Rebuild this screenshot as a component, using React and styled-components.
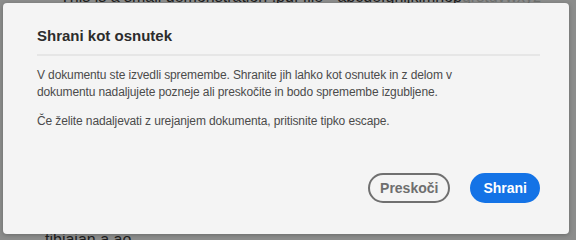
import React from "react";
import styled, { createGlobalStyle } from "styled-components";

const Global = createGlobalStyle`
  html, body { margin: 0; padding: 0; }
  body {
    width: 576px; height: 240px; overflow: hidden;
    background: #8c8d8c;
    font-family: "Liberation Sans", Arial, sans-serif;
  }
`;

const Backdrop = styled.div`
  position: relative;
  width: 576px;
  height: 240px;
  overflow: hidden;
  background: #8c8d8c;
`;

const DocLine = styled.div`
  position: absolute;
  left: ${(p) => p.$x}px;
  top: ${(p) => p.$y}px;
  font-size: 16px;
  color: #1e1e1e;
  white-space: nowrap;
  span { color: #6f716f; }
`;

const Dialog = styled.div`
  position: absolute;
  left: 3px;
  top: 3px;
  width: 566px;
  height: 231px;
  box-sizing: border-box;
  background: #f4f4f4;
  border-radius: 4px;
  padding: 24px 29px 0 34px;
  display: flex;
  flex-direction: column;
  box-shadow: 0 1px 4px rgba(0,0,0,0.25);
`;

const Title = styled.h2`
  margin: 0;
  font-size: 15px;
  font-weight: 700;
  color: #2c2c2c;
  line-height: 18px;
  padding-bottom: 9px;
  border-bottom: 2px solid #e6e6e6;
`;

const Body = styled.div`
  margin-top: 11px;
  font-size: 12px;
  letter-spacing: -0.12px;
  line-height: 17px;
  color: #4b4b4b;
  p { margin: 0 0 12px 0; }
`;

const Footer = styled.div`
  margin-top: auto;
  margin-bottom: 31px;
  display: flex;
  justify-content: flex-end;
  gap: 20px;
`;

const Button = styled.button`
  height: 30px;
  box-sizing: border-box;
  border-radius: 15px;
  padding: 0 ${(p) => (p.$primary ? "11px" : "10px")};
  font-family: "Liberation Sans", Arial, sans-serif;
  font-size: 14px;
  font-weight: 700;
  cursor: pointer;
  border: 2px solid ${(p) => (p.$primary ? "#1473e6" : "#707070")};
  background: ${(p) => (p.$primary ? "#1473e6" : "transparent")};
  color: ${(p) => (p.$primary ? "#ffffff" : "#6e6e6e")};
`;

export default function App() {
  return (
    <Backdrop>
      <Global />
      <DocLine $x={60} $y={-12}>
        This is a small demonstration .pdf file - abcdefghijklmnop<span>qrstuvwxyz</span>
      </DocLine>
      <DocLine $x={45} $y={231}>tibiaian a ao</DocLine>
      <Dialog>
        <Title>Shrani kot osnutek</Title>
        <Body>
          <p>
            V dokumentu ste izvedli spremembe. Shranite jih lahko kot osnutek in z delom v
            <br />
            dokumentu nadaljujete pozneje ali preskočite in bodo spremembe izgubljene.
          </p>
          <p>Če želite nadaljevati z urejanjem dokumenta, pritisnite tipko escape.</p>
        </Body>
        <Footer>
          <Button>Preskoči</Button>
          <Button $primary>Shrani</Button>
        </Footer>
      </Dialog>
    </Backdrop>
  );
}
